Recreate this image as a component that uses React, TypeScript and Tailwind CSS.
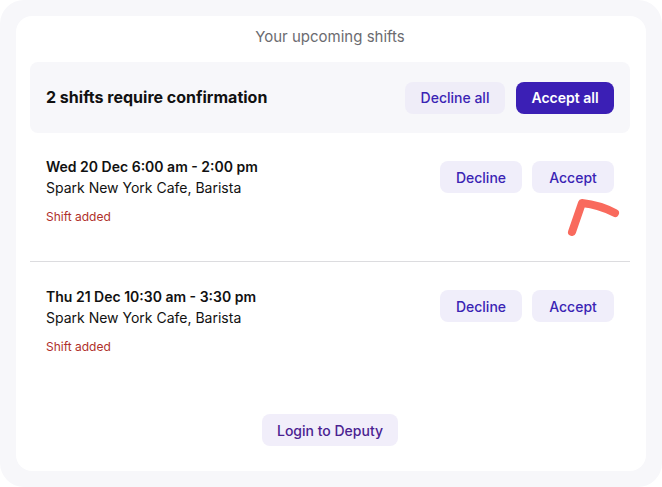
import React from "react";

function Shift({ title, sub, btnTop }: { title: string; sub: string; btnTop: string }) {
  return (
    <div className="flex justify-between px-4">
      <div className="flex flex-col">
        <div className="text-[14px] leading-[21px] font-semibold text-[#111]">{title}</div>
        <div className="text-[14px] leading-[21px] text-[#111]">{sub}</div>
        <div className="mt-[11px] text-[12px] leading-[16px] text-[#b0302a]">Shift added</div>
      </div>
      <div className={"flex gap-[10px] h-[32px] " + btnTop}>
        <button className="w-[82px] h-[32px] rounded-[8px] bg-[#f0eefa] text-[#3a24b4] text-[14px] font-medium">
          Decline
        </button>
        <button className="w-[82px] h-[32px] rounded-[8px] bg-[#f0eefa] text-[#3a24b4] text-[14px] font-medium">
          Accept
        </button>
      </div>
    </div>
  );
}

export default function App() {
  return (
    <div
      className="relative w-[662px] h-[487px] bg-white"
      style={{ fontFamily: "Inter, 'Noto Sans', sans-serif" }}
    >
      <div className="w-full h-full bg-[#f7f7fa] rounded-[24px] p-4">
        <div className="h-full bg-white rounded-[16px] pl-[14px] pr-[16px] pt-[10px] flex flex-col">
          <div className="text-center text-[15px] leading-[22px] text-[#6b6b70]">Your upcoming shifts</div>
          <div className="mt-[14px] h-[71px] bg-[#f7f7fa] rounded-[8px] px-4 flex items-center justify-between">
            <div className="text-[16px] leading-[20px] font-bold text-[#111] mb-[2px]">2 shifts require confirmation</div>
            <div className="flex gap-[11px]">
              <button className="w-[100px] h-[32px] rounded-[8px] bg-[#efedf8] text-[#3a24b4] text-[14px] font-medium">
                Decline all
              </button>
              <button className="w-[98px] h-[32px] rounded-[8px] bg-[#3b1fb5] text-white text-[14px] font-semibold">
                Accept all
              </button>
            </div>
          </div>
          <div className="pt-[23px] pb-[36px]">
            <Shift title="Wed 20 Dec 6:00 am - 2:00 pm" sub="Spark New York Cafe, Barista" btnTop="mt-[5px]" />
          </div>
          <div className="h-px bg-[#dcdcdf]" />
          <div className="pt-[24px]">
            <Shift title="Thu 21 Dec 10:30 am - 3:30 pm" sub="Spark New York Cafe, Barista" btnTop="mt-[4px]" />
          </div>
          <div className="flex justify-center mt-[59px]">
            <button className="w-[136px] h-[32px] rounded-[8px] bg-[#f1eefa] text-[#4a2291] text-[14px] font-medium">
              Login to Deputy
            </button>
          </div>
        </div>
      </div>
      <svg
        className="absolute left-0 top-0 pointer-events-none"
        width="662"
        height="487"
        viewBox="0 0 662 487"
      >
        <path
          d="M572 232 L582 203 Q600 205 615 213"
          fill="none"
          stroke="#f96a5d"
          strokeWidth="8"
          strokeLinecap="round"
          strokeLinejoin="round"
        />
      </svg>
    </div>
  );
}
